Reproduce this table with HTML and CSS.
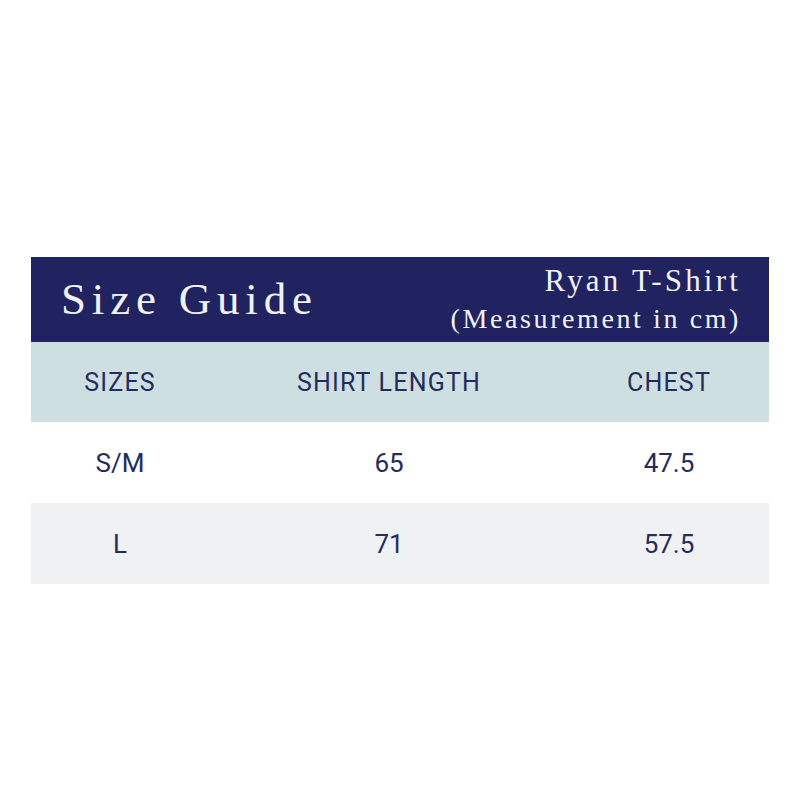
FILE: index.html
```html
<!DOCTYPE html>
<html>
<head>
<meta charset="utf-8">
<link rel="stylesheet" href="styles.css">
</head>
<body>
<div class="page">
  <div class="guide">
    <div class="banner">
      <div class="title">Size Guide</div>
      <div class="sub">
        <div class="product">Ryan T-Shirt</div>
        <div class="unit">(Measurement in cm)</div>
      </div>
    </div>
    <div class="row head">
      <div class="cell">SIZES</div>
      <div class="cell">SHIRT LENGTH</div>
      <div class="cell">CHEST</div>
    </div>
    <div class="row data">
      <div class="cell">S/M</div>
      <div class="cell">65</div>
      <div class="cell">47.5</div>
    </div>
    <div class="row data alt">
      <div class="cell">L</div>
      <div class="cell">71</div>
      <div class="cell">57.5</div>
    </div>
  </div>
</div>
</body>
</html>
```

FILE: styles.css
```css
html, body {
  margin: 0;
  padding: 0;
  background: #ffffff;
}
.page {
  width: 800px;
  height: 800px;
  padding-top: 257px;
  box-sizing: border-box;
}
.guide {
  margin-left: 31px;
  width: 738px;
}
.banner {
  height: 85px;
  background: #202360;
  color: #f2f2f6;
  display: flex;
  justify-content: space-between;
  align-items: center;
  font-family: "Liberation Serif", serif;
  box-sizing: border-box;
  padding: 0 28px 0 30px;
}
.title {
  font-size: 45px;
  letter-spacing: 5.8px;
  margin-bottom: 2px;
}
.sub {
  text-align: right;
  line-height: 1.1;
}
.product {
  font-size: 31px;
  letter-spacing: 3.2px;
}
.unit {
  font-size: 28px;
  letter-spacing: 2.6px;
  margin-top: 6px;
}
.row {
  display: grid;
  grid-template-columns: 178px 360px 200px;
  align-items: center;
  font-family: Roboto, "Noto Sans", sans-serif;
  color: #262b5d;
}
.cell {
  text-align: center;
}
.head {
  height: 80px;
  background: #cddfe0;
  font-size: 25px;
  letter-spacing: 1.2px;
}
.data {
  height: 81px;
  background: #ffffff;
  font-size: 26px;
  padding-top: 1px;
  box-sizing: border-box;
}
.alt {
  background: #f0f1f3;
}
```
